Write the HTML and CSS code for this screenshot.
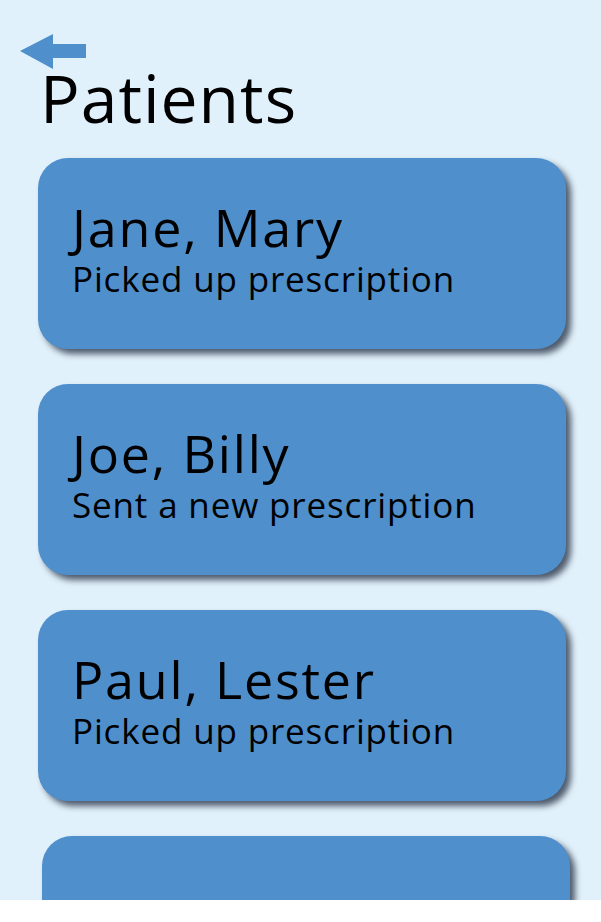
FILE: index.html
```html
<!DOCTYPE html>
<html>
<head>
<meta charset="utf-8">
<link rel="stylesheet" href="styles.css">
</head>
<body>
<div class="screen">
  <div class="topbar">
    <svg class="back" width="66" height="36" viewBox="0 0 66 36">
      <polygon points="0,17 33,0 33,35" fill="#4f8fcc"/>
      <rect x="32" y="10" width="34" height="14" fill="#4f8fcc"/>
    </svg>
  </div>
  <h1 class="title">Patients</h1>
  <div class="list">
    <div class="card">
      <div class="name">Jane, Mary</div>
      <div class="status">Picked up prescription</div>
    </div>
    <div class="card">
      <div class="name">Joe, Billy</div>
      <div class="status">Sent a new prescription</div>
    </div>
    <div class="card">
      <div class="name">Paul, Lester</div>
      <div class="status">Picked up prescription</div>
    </div>
    <div class="card partial"></div>
  </div>
</div>
</body>
</html>
```
FILE: styles.css
```css
html, body {
  margin: 0;
  padding: 0;
  background: #ffffff;
}
body {
  font-family: "Open Sans", Lato, sans-serif;
  color: #000;
}
.screen {
  background: #e1f1fb;
  height: 900px;
  width: 601px;
  box-sizing: border-box;
  padding-top: 34px;
}
.topbar {
  height: 36px;
  padding-left: 20px;
}
.back {
  display: block;
}
.title {
  margin: 0;
  padding-left: 40px;
  font-weight: 400;
  font-size: 66px;
  letter-spacing: 1px;
  line-height: 55px;
  height: 88px;
}
.list {
  display: flex;
  flex-direction: column;
  gap: 35px;
  padding-left: 38px;
}
.card {
  width: 528px;
  height: 191px;
  box-sizing: border-box;
  background: #4f8fcc;
  border-radius: 30px;
  box-shadow: 5px 5px 6px rgba(30, 40, 60, 0.75);
  padding: 39px 0 0 34px;
}
.name {
  font-size: 52px;
  letter-spacing: 1.8px;
  line-height: 60px;
}
.status {
  font-size: 35px;
  letter-spacing: 0.85px;
  line-height: 43px;
}
.card.partial {
  margin-left: 4px;
  height: 64px;
  border-radius: 30px 30px 0 0;
  padding: 0;
}
```
